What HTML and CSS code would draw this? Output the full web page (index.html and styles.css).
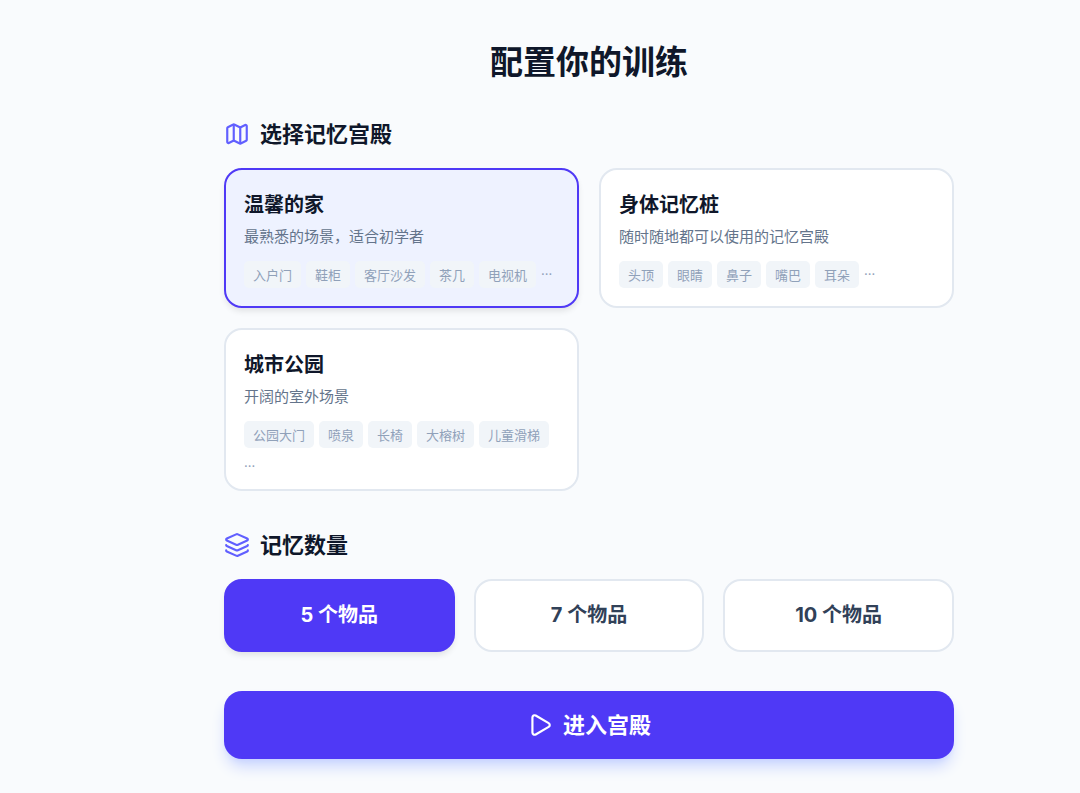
FILE: index.html
```html
<!DOCTYPE html>
<html lang="zh-CN">

<head>
    <meta charset="UTF-8" />
    <meta name="viewport" content="width=device-width, initial-scale=1.0" />
    <title>配置你的训练</title>
    <link rel="stylesheet" href="styles.css">
</head>

<body>
    <main class="container">
        <h1>配置你的训练</h1>

        <section class="section">
            <h2>
                <svg class="icon" viewBox="0 0 24 24">
                    <path d="M14.106 5.553a2 2 0 0 0 1.788 0l3.659-1.83A1 1 0 0 1 21 4.619v12.764a1 1 0 0 1-.553.894l-4.553 2.277a2 2 0 0 1-1.788 0l-4.212-2.106a2 2 0 0 0-1.788 0l-3.659 1.83A1 1 0 0 1 3 19.381V6.618a1 1 0 0 1 .553-.894l4.553-2.277a2 2 0 0 1 1.788 0z" />
                    <path d="M15 5.764v15" />
                    <path d="M9 3.236v15" />
                </svg>
                选择记忆宫殿
            </h2>
            <div class="palaces">
                <button type="button" class="palace selected" aria-pressed="true">
                    <span class="palace-name">温馨的家</span>
                    <span class="palace-desc">最熟悉的场景，适合初学者</span>
                    <span class="tags">
                        <span class="tag">入户门</span>
                        <span class="tag">鞋柜</span>
                        <span class="tag">客厅沙发</span>
                        <span class="tag">茶几</span>
                        <span class="tag">电视机</span>
                        <span class="more">...</span>
                    </span>
                </button>
                <button type="button" class="palace" aria-pressed="false">
                    <span class="palace-name">身体记忆桩</span>
                    <span class="palace-desc">随时随地都可以使用的记忆宫殿</span>
                    <span class="tags">
                        <span class="tag">头顶</span>
                        <span class="tag">眼睛</span>
                        <span class="tag">鼻子</span>
                        <span class="tag">嘴巴</span>
                        <span class="tag">耳朵</span>
                        <span class="more">...</span>
                    </span>
                </button>
                <button type="button" class="palace" aria-pressed="false">
                    <span class="palace-name">城市公园</span>
                    <span class="palace-desc">开阔的室外场景</span>
                    <span class="tags">
                        <span class="tag">公园大门</span>
                        <span class="tag">喷泉</span>
                        <span class="tag">长椅</span>
                        <span class="tag">大榕树</span>
                        <span class="tag">儿童滑梯</span>
                        <span class="more">...</span>
                    </span>
                </button>
            </div>
        </section>

        <section class="section">
            <h2>
                <svg class="icon" viewBox="0 0 24 24">
                    <path d="M12.83 2.18a2 2 0 0 0-1.66 0L2.6 6.08a1 1 0 0 0 0 1.83l8.58 3.91a2 2 0 0 0 1.66 0l8.58-3.9a1 1 0 0 0 0-1.83z" />
                    <path d="M2 12a1 1 0 0 0 .58.91l8.6 3.91a2 2 0 0 0 1.65 0l8.58-3.9A1 1 0 0 0 22 12" />
                    <path d="M2 17a1 1 0 0 0 .58.91l8.6 3.91a2 2 0 0 0 1.65 0l8.58-3.9A1 1 0 0 0 22 17" />
                </svg>
                记忆数量
            </h2>
            <div class="counts">
                <button type="button" class="count selected" aria-pressed="true">5 个物品</button>
                <button type="button" class="count" aria-pressed="false">7 个物品</button>
                <button type="button" class="count" aria-pressed="false">10 个物品</button>
            </div>
        </section>

        <button type="button" class="start">
            <svg class="icon" viewBox="0 0 24 24">
                <path d="M5 5a2 2 0 0 1 3.008-1.728l11.997 6.998a2 2 0 0 1 .003 3.458l-12 7A2 2 0 0 1 5 19z" />
            </svg>
            进入宫殿
        </button>
    </main>

    <script>
        // one choice per group
        const setupGroup = (selector) => {
            const items = document.querySelectorAll(selector);
            items.forEach((item) => {
                item.addEventListener("click", () => {
                    items.forEach((other) => {
                        other.classList.toggle("selected", other === item);
                        other.setAttribute("aria-pressed", other === item);
                    });
                });
            });
        };

        setupGroup(".palace");
        setupGroup(".count");
    </script>
</body>

</html>
```

FILE: styles.css
```css
* {
    box-sizing: border-box;
}

body {
    margin: 0;
    padding: 42px 0 32px 98px;
    background-color: #f9fbfd;
    color: #0f172a;
    font-family: Inter, "Noto Sans CJK SC", sans-serif;
}

.container {
    max-width: 730px;
    margin: 0 auto;
}

h1 {
    margin: 0 0 37px;
    font-size: 33px;
    line-height: 40px;
    text-align: center;
}

h2 {
    display: flex;
    align-items: center;
    gap: 10px;
    margin: 0 0 19px;
    font-size: 22px;
    line-height: 30px;
}

.section {
    margin-bottom: 39px;
}

.icon {
    width: 26px;
    height: 26px;
    fill: none;
    stroke: currentColor;
    stroke-width: 2;
    stroke-linecap: round;
    stroke-linejoin: round;
}

h2 .icon {
    color: #615fff;
}

button {
    font-family: inherit;
    cursor: pointer;
}

.palaces {
    display: grid;
    grid-template-columns: 1fr 1fr;
    gap: 20px;
}

.palace {
    display: flex;
    flex-direction: column;
    padding: 18px;
    border: 2px solid #e2e8f0;
    border-radius: 18px;
    background-color: white;
    color: #0f172a;
    text-align: left;
}

.palace.selected {
    border-color: #4f39f6;
    background-color: #eef2ff;
    box-shadow: 0 4px 6px -1px rgba(0, 0, 0, 0.1);
}

.palace-name {
    margin-bottom: 4px;
    font-size: 20px;
    font-weight: bold;
    line-height: 34px;
}

.palace-desc {
    margin-bottom: 13px;
    color: #64748b;
    font-size: 15px;
    line-height: 22px;
}

.tags {
    display: flex;
    flex-wrap: wrap;
    gap: 5px;
    color: #90a1b9;
    font-size: 13px;
    line-height: 18px;
}

.tag {
    padding: 5px 9px 4px;
    border-radius: 5px;
    background-color: #f1f5f9;
}

.counts {
    display: grid;
    grid-template-columns: repeat(3, 1fr);
    gap: 19px;
}

.count {
    padding: 20px;
    border: 2px solid #e2e8f0;
    border-radius: 18px;
    background-color: white;
    color: #314158;
    font-size: 20px;
    font-weight: bold;
    line-height: 29px;
}

.count.selected {
    border-color: #4f39f6;
    background-color: #4f39f6;
    color: white;
    box-shadow: 0 4px 6px -1px rgba(0, 0, 0, 0.1);
}

.start {
    display: flex;
    justify-content: center;
    align-items: center;
    gap: 10px;
    width: 100%;
    padding: 19px;
    border: none;
    border-radius: 18px;
    background-color: #4f39f6;
    color: white;
    font-size: 22px;
    font-weight: bold;
    line-height: 30px;
    box-shadow: 0 10px 15px -3px #c6d2ff, 0 4px 6px -4px #c6d2ff;
}

.start:hover {
    background-color: #432dd7;
}
```
